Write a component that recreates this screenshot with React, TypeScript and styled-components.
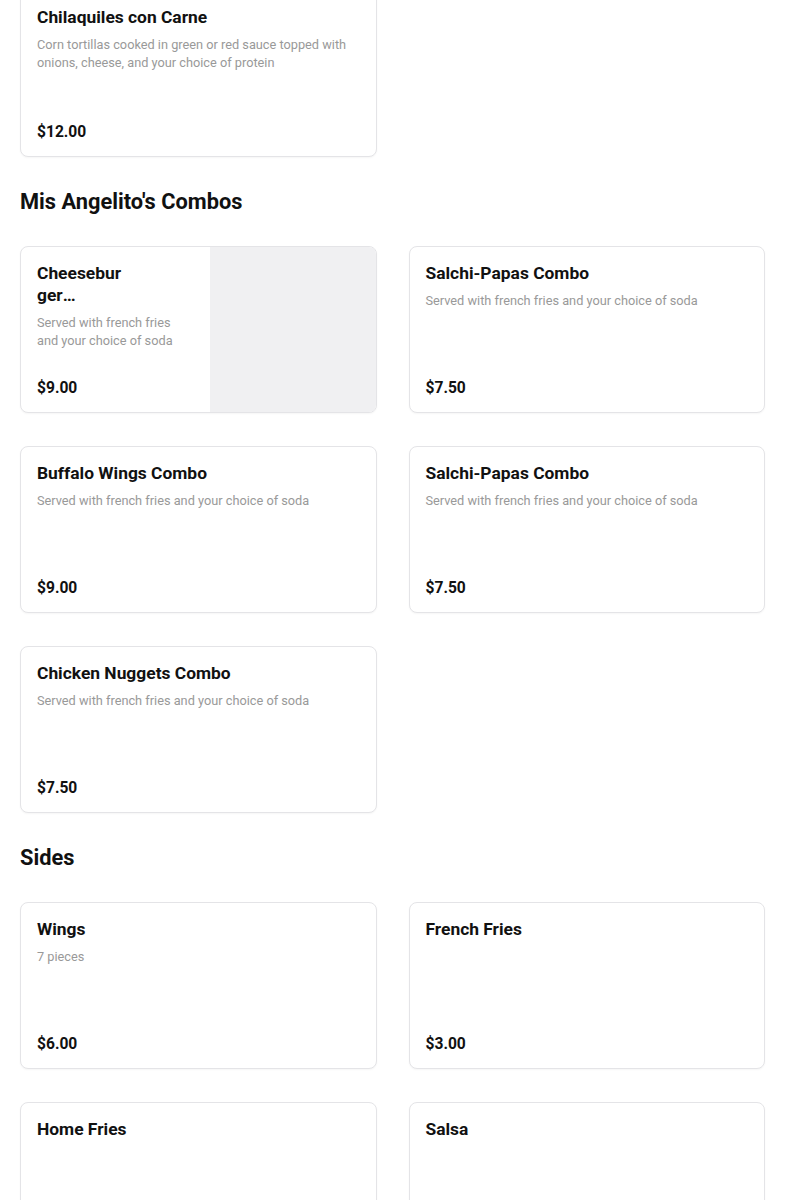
import React from "react";
import styled, { createGlobalStyle } from "styled-components";

const Global = createGlobalStyle`
  html, body { margin: 0; padding: 0; background: #fff; }
  body { font-family: Roboto, "Liberation Sans", Arial, sans-serif; color: #111; }
`;

const Page = styled.div`
  padding: 0 20px;
  margin-top: -10px;
  display: flex;
  flex-direction: column;
`;

const Section = styled.section`
  display: flex;
  flex-direction: column;
`;

const Heading = styled.h2`
  margin: 33px 0 32px;
  font-size: 21.8px;
  line-height: 24px;
  font-weight: 700;
  color: #111;
`;

const Grid = styled.div`
  display: grid;
  grid-template-columns: 1fr 1fr;
  column-gap: 32px;
  row-gap: 33px;
`;

const Card = styled.div`
  height: 167px;
  box-sizing: border-box;
  border: 1px solid #e4e4e7;
  border-radius: 8px;
  background: #fff;
  box-shadow: 0 1px 2px rgba(0, 0, 0, 0.04);
  display: flex;
  overflow: hidden;
`;

const Body = styled.div`
  flex: 1;
  min-width: 0;
  padding: 15px 16px 14px;
  display: flex;
  flex-direction: column;
`;

const Title = styled.div<{ $narrow?: boolean }>`
  font-size: 17.4px;
  line-height: 22px;
  font-weight: 700;
  color: #111;
  ${(p) =>
    p.$narrow
      ? `max-width: 85px;
         overflow-wrap: anywhere;
         display: -webkit-box;
         -webkit-line-clamp: 2;
         -webkit-box-orient: vertical;
         overflow: hidden;`
      : ""}
`;

const Desc = styled.div`
  margin-top: 8px;
  font-size: 12.75px;
  line-height: 18px;
  color: #999;
`;

const Price = styled.div`
  margin-top: auto;
  font-size: 15.6px;
  line-height: 20px;
  font-weight: 700;
  color: #111;
`;

const Photo = styled.div`
  width: 166px;
  flex-shrink: 0;
  background: #f0f0f2;
`;

type Item = { title: string; desc?: string; price?: string; image?: boolean };

const MenuCard = ({ item }: { item: Item }) => (
  <Card>
    <Body>
      <Title $narrow={item.image}>{item.title}</Title>
      {item.desc && <Desc>{item.desc}</Desc>}
      {item.price && <Price>{item.price}</Price>}
    </Body>
    {item.image && <Photo />}
  </Card>
);

const soda = "Served with french fries and your choice of soda";

const sections: { name?: string; items: Item[] }[] = [
  {
    items: [
      {
        title: "Chilaquiles con Carne",
        desc: "Corn tortillas cooked in green or red sauce topped with onions, cheese, and your choice of protein",
        price: "$12.00",
      },
    ],
  },
  {
    name: "Mis Angelito's Combos",
    items: [
      { title: "Cheeseburger Combo", desc: soda, price: "$9.00", image: true },
      { title: "Salchi-Papas Combo", desc: soda, price: "$7.50" },
      { title: "Buffalo Wings Combo", desc: soda, price: "$9.00" },
      { title: "Salchi-Papas Combo", desc: soda, price: "$7.50" },
      { title: "Chicken Nuggets Combo", desc: soda, price: "$7.50" },
    ],
  },
  {
    name: "Sides",
    items: [
      { title: "Wings", desc: "7 pieces", price: "$6.00" },
      { title: "French Fries", price: "$3.00" },
      { title: "Home Fries", price: "$3.00" },
      { title: "Salsa", price: "$1.00" },
    ],
  },
];

export default function App() {
  return (
    <>
      <Global />
      <Page>
        {sections.map((s, i) => (
          <Section key={i}>
            {s.name && <Heading>{s.name}</Heading>}
            <Grid>
              {s.items.map((it, j) => (
                <MenuCard key={j} item={it} />
              ))}
            </Grid>
          </Section>
        ))}
      </Page>
    </>
  );
}
